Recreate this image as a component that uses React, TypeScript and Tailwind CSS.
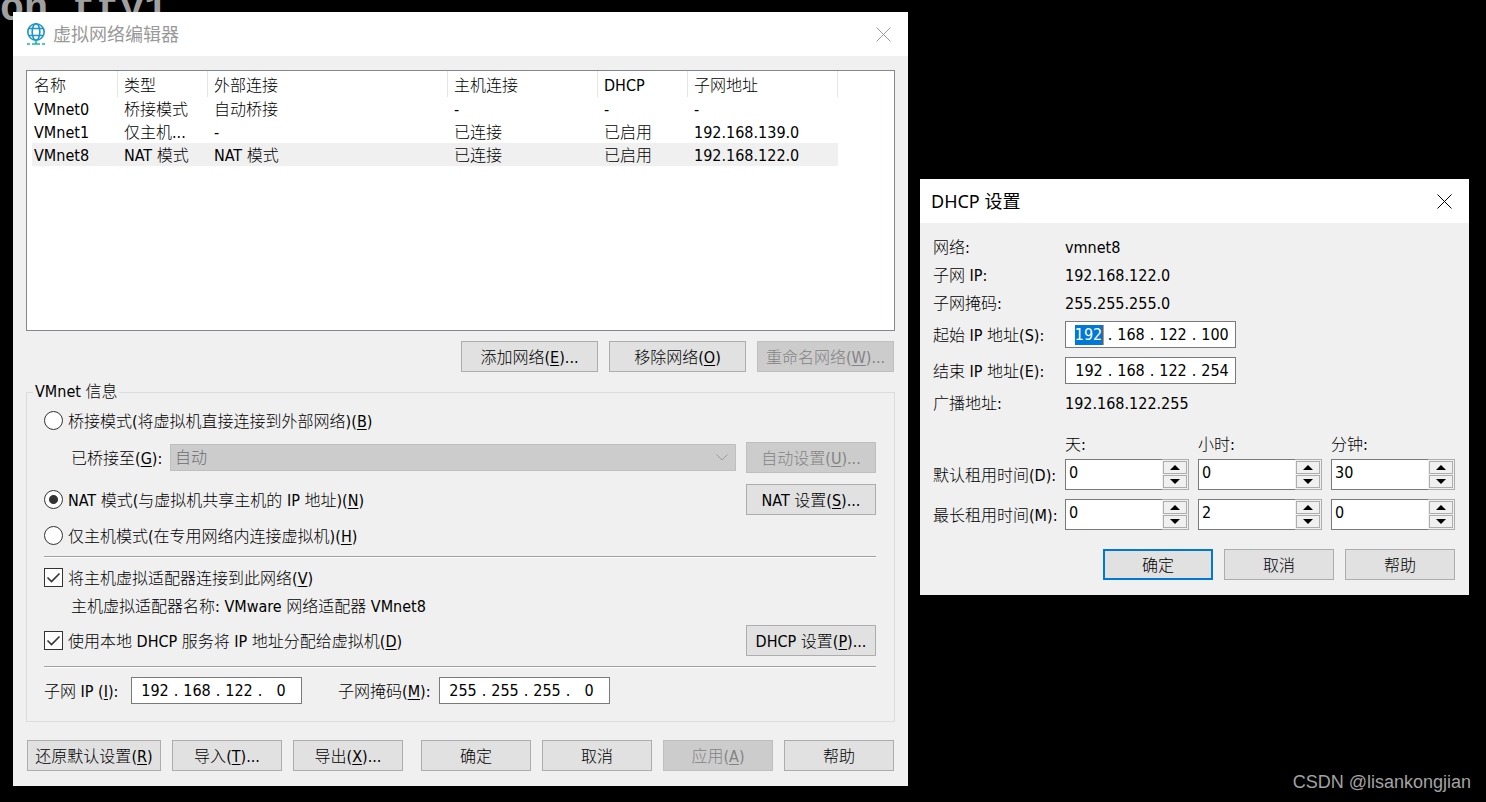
import { useState, type ReactNode } from "react";
import clsx from "clsx";

const networks = [
  { name: "VMnet0", type: "桥接模式", external: "自动桥接", host: "-", dhcp: "-", subnet: "-" },
  { name: "VMnet1", type: "仅主机...", external: "-", host: "已连接", dhcp: "已启用", subnet: "192.168.139.0" },
  { name: "VMnet8", type: "NAT 模式", external: "NAT 模式", host: "已连接", dhcp: "已启用", subnet: "192.168.122.0" },
];

const columns = [
  { title: "名称", width: "w-[86px]" },
  { title: "类型", width: "w-[90px]" },
  { title: "外部连接", width: "w-[240px]" },
  { title: "主机连接", width: "w-[150px]" },
  { title: "DHCP", width: "w-[90px]" },
  { title: "子网地址", width: "w-[150px]" },
];

// Label text with an underlined access key, e.g. 导入(T)...
function Keyed({ text, k, after = "" }: { text: string; k: string; after?: string }) {
  return (
    <span className="whitespace-nowrap">
      {text}(<span className="underline underline-offset-2">{k}</span>){after}
    </span>
  );
}

type ButtonProps = {
  children: ReactNode;
  className?: string;
  disabled?: boolean;
  primary?: boolean;
};

function Button({ children, className, disabled, primary }: ButtonProps) {
  return (
    <button
      type="button"
      disabled={disabled}
      className={clsx(
        "flex h-[31px] shrink-0 items-center justify-center pt-0.5",
        disabled && "border border-[#bfbfbf] bg-[#cccccc] text-[#838383]",
        !disabled && "bg-[#e1e1e1] text-black",
        !disabled && (primary ? "border-2 border-[#0078d7]" : "border border-[#adadad]"),
        className
      )}
    >
      {children}
    </button>
  );
}

function CloseButton({ className }: { className: string }) {
  return (
    <button type="button" aria-label="关闭" className={clsx("ml-auto", className)}>
      <svg width="15" height="15" viewBox="0 0 15 15" fill="none" stroke="currentColor">
        <path d="M0.5 0.5L14.5 14.5M14.5 0.5L0.5 14.5" />
      </svg>
    </button>
  );
}

function NetworkIcon() {
  return (
    <svg width="20" height="22" viewBox="0 0 20 22" fill="none">
      <g stroke="#1b95cb" strokeWidth="1.6">
        <circle cx="10" cy="9" r="8.2" />
        <ellipse cx="10" cy="9" rx="3.8" ry="8.2" />
        <path d="M3 5.5H17M3 12.5H17" />
      </g>
      <path d="M10 17V21M6 21H14M1 21H4M16 21H19" stroke="#14b8a6" strokeWidth="1.6" />
    </svg>
  );
}

type IpFieldProps = { label: string; value: string[]; selected?: number };

function IpField({ label, value, selected }: IpFieldProps) {
  return (
    <div role="group" aria-label={label} className="flex h-[27px] w-[171px] shrink-0 items-center border border-[#7a7a7a] bg-white pl-1.5">
      {value.map((octet, i) => (
        <div key={i} className="flex items-center">
          {i > 0 && <span className="w-2 text-center">.</span>}
          <div className="flex w-[34px] justify-center">
            <input
              aria-label={`${label} ${i + 1}`}
              defaultValue={octet}
              className={clsx(
                "h-5 text-center outline-none",
                selected === i ? "w-[29px] border-r border-[#ff8728] bg-[#0078d7] text-white" : "w-[34px]"
              )}
            />
          </div>
        </div>
      ))}
    </div>
  );
}

function Spinner({ label, initial }: { label: string; initial: number }) {
  const [value, setValue] = useState(initial);

  return (
    <div className="flex h-[31px] w-[124px]">
      <input
        aria-label={label}
        value={value}
        onChange={(e) => setValue(Number(e.target.value) || 0)}
        className="min-w-0 flex-1 border border-r-0 border-[#7a7a7a] bg-white pb-1 pl-[3px] outline-none"
      />
      <div className="flex w-[27px] flex-col gap-px border border-l-0 border-[#adadad] p-px">
        <button
          type="button"
          aria-label={`${label} +`}
          onClick={() => setValue(value + 1)}
          className="flex flex-1 items-center justify-center border border-[#adadad]"
        >
          <svg width="10" height="5" viewBox="0 0 10 5">
            <path d="M0 5L5 0L10 5Z" />
          </svg>
        </button>
        <button
          type="button"
          aria-label={`${label} -`}
          onClick={() => setValue(Math.max(0, value - 1))}
          className="flex flex-1 items-center justify-center border border-[#adadad]"
        >
          <svg width="10" height="5" viewBox="0 0 10 5">
            <path d="M0 0L5 5L10 0Z" />
          </svg>
        </button>
      </div>
    </div>
  );
}

type RadioProps = { children: ReactNode; value: string; mode: string; onChange: (v: string) => void };

function Radio({ children, value, mode, onChange }: RadioProps) {
  return (
    <label className="flex h-5 items-start gap-[5px] leading-[22px]">
      <input
        type="radio"
        name="mode"
        checked={mode === value}
        onChange={() => onChange(value)}
        className="size-[19px] appearance-none rounded-full border border-[#333333] bg-white checked:bg-[radial-gradient(circle,#333333_4px,#ffffff_5px)]"
      />
      {children}
    </label>
  );
}

function Checkbox({ children }: { children: ReactNode }) {
  return (
    <label className="flex h-5 items-start gap-[5px] leading-[22px]">
      <span className="relative flex size-[19px]">
        <input type="checkbox" defaultChecked className="peer size-[19px] appearance-none border border-[#333333] bg-white" />
        <svg
          className="pointer-events-none absolute inset-0 hidden peer-checked:block"
          width="19"
          height="19"
          viewBox="0 0 19 19"
          fill="none"
          stroke="#333333"
          strokeWidth="1.6"
        >
          <path d="M3.5 9.5L7.5 13.5L15.5 5.5" />
        </svg>
      </span>
      {children}
    </label>
  );
}

function Separator() {
  return <div className="h-0.5 border-b border-white bg-[#a0a0a0]" />;
}

function NetworkTable() {
  return (
    <div className="h-[261px] border border-[#828790] bg-white pl-[5px]">
      <table className="table-fixed border-separate border-spacing-0 text-left">
        <thead>
          <tr className="h-[26px]">
            {columns.map((c, i) => (
              <th key={c.title} className={clsx("border-r border-[#e5e5e5] p-0 pt-1 font-light", i === 0 ? "pl-0.5" : "pl-1.5", c.width)}>
                {c.title}
              </th>
            ))}
          </tr>
        </thead>
        <tbody>
          {networks.map((n) => (
            <tr key={n.name} className={clsx("h-[23px]", n.name === "VMnet8" && "bg-[#f0f0f0]")}>
              <td className="p-0 pt-0.5 pl-0.5">{n.name}</td>
              <td className="p-0 pt-0.5 pl-1.5 whitespace-nowrap">{n.type}</td>
              <td className="p-0 pt-0.5 pl-1.5">{n.external}</td>
              <td className="p-0 pt-0.5 pl-1.5">{n.host}</td>
              <td className="p-0 pt-0.5 pl-1.5">{n.dhcp}</td>
              <td className="p-0 pt-0.5 pl-1.5">{n.subnet}</td>
            </tr>
          ))}
        </tbody>
      </table>
    </div>
  );
}

function NetworkEditor() {
  const [mode, setMode] = useState("nat");

  return (
    <section className="relative min-w-0 flex-[895] bg-[#f0f0f0]">
      <header className="flex h-11 items-center bg-white pr-[17px] pl-[13px]">
        <NetworkIcon />
        <h1 className="ml-[7px] font-['Noto_Sans','Noto_Sans_CJK_SC',sans-serif] text-lg font-normal text-[#999999]">虚拟网络编辑器</h1>
        <CloseButton className="text-[#999999]" />
      </header>

      <div className="px-[13px] pt-3.5 pb-[15px]">
        <NetworkTable />

        <div className="mt-2.5 mr-px flex justify-end gap-[11px]">
          <Button className="w-[137px]"><Keyed text="添加网络" k="E" after="..." /></Button>
          <Button className="w-[137px]"><Keyed text="移除网络" k="O" /></Button>
          <Button className="w-[137px]" disabled><Keyed text="重命名网络" k="W" after="..." /></Button>
        </div>

        <fieldset className="mt-2.5 border border-[#dcdcdc] pr-[18px] pb-[17px] pl-[17px]">
          <legend className="-ml-[11px] px-0.5 leading-5">VMnet 信息</legend>

          <div className="mt-[9px]">
            <Radio value="bridge" mode={mode} onChange={setMode}>
              <Keyed text="桥接模式(将虚拟机直接连接到外部网络)" k="B" />
            </Radio>
          </div>

          <div className="mt-[11px] flex items-center pl-[27px]">
            <label htmlFor="bridged" className="w-[99px] pt-0.5"><Keyed text="已桥接至" k="G" after=":" /></label>
            <div className="relative flex flex-1">
              <select id="bridged" disabled className="h-[27px] w-full appearance-none border border-[#bfbfbf] bg-[#cccccc] pl-1 text-[#6d6d6d] opacity-100">
                <option>自动</option>
              </select>
              <svg className="absolute top-2.5 right-2" width="12" height="7" viewBox="0 0 12 7" fill="none" stroke="#9a9a9a">
                <path d="M0.5 0.5L6 6L11.5 0.5" />
              </svg>
            </div>
            <Button className="ml-2.5 w-[130px]" disabled><Keyed text="自动设置" k="U" after="..." /></Button>
          </div>

          <div className="mt-[11px] flex items-center justify-between">
            <Radio value="nat" mode={mode} onChange={setMode}>
              <Keyed text="NAT 模式(与虚拟机共享主机的 IP 地址)" k="N" />
            </Radio>
            <Button className="w-[130px]"><Keyed text="NAT 设置" k="S" after="..." /></Button>
          </div>

          <div className="mt-[11px] mb-2.5">
            <Radio value="host" mode={mode} onChange={setMode}>
              <Keyed text="仅主机模式(在专用网络内连接虚拟机)" k="H" />
            </Radio>
          </div>

          <Separator />

          <div className="mt-2.5">
            <Checkbox><Keyed text="将主机虚拟适配器连接到此网络" k="V" /></Checkbox>
          </div>
          <p className="mt-[9px] pl-[27px] leading-5">主机虚拟适配器名称: VMware 网络适配器 VMnet8</p>

          <div className="mt-2 mb-2.5 flex items-center justify-between">
            <Checkbox><Keyed text="使用本地 DHCP 服务将 IP 地址分配给虚拟机" k="D" /></Checkbox>
            <Button className="w-[130px]"><Keyed text="DHCP 设置" k="P" after="..." /></Button>
          </div>

          <Separator />

          <div className="mt-[9px] flex items-center">
            <span className="w-[87px] pt-0.5"><Keyed text="子网 IP " k="I" after=":" /></span>
            <IpField label="子网 IP" value={["192", "168", "122", "0"]} />
            <span className="ml-9 w-[101px] pt-0.5"><Keyed text="子网掩码" k="M" after=":" /></span>
            <IpField label="子网掩码" value={["255", "255", "255", "0"]} />
          </div>
        </fieldset>

        <footer className="mt-[18px] mr-px ml-px flex gap-[11px]">
          <Button className="w-[134px]"><Keyed text="还原默认设置" k="R" /></Button>
          <Button className="w-[110px]"><Keyed text="导入" k="T" after="..." /></Button>
          <Button className="w-[110px]"><Keyed text="导出" k="X" after="..." /></Button>
          <Button className="ml-auto w-[110px]">确定</Button>
          <Button className="w-[110px]">取消</Button>
          <Button className="w-[110px]" disabled><Keyed text="应用" k="A" /></Button>
          <Button className="w-[110px]">帮助</Button>
        </footer>
      </div>
    </section>
  );
}

function DhcpDialog() {
  return (
    <section className="relative mt-[167px] min-w-0 flex-[549] bg-[#f0f0f0]">
      <header className="flex h-11 items-center bg-white pr-[17px] pl-[11px]">
        <h2 className="font-['Noto_Sans','Noto_Sans_CJK_SC',sans-serif] text-lg font-normal">DHCP 设置</h2>
        <CloseButton className="text-black" />
      </header>

      <div className="pt-[11px] pr-3.5 pb-[15px] pl-[13px]">
        <dl className="grid grid-cols-[132px_1fr] leading-7">
          <dt>网络:</dt>
          <dd>vmnet8</dd>
          <dt>子网 IP:</dt>
          <dd>192.168.122.0</dd>
          <dt>子网掩码:</dt>
          <dd>255.255.255.0</dd>
        </dl>
        <div className="mt-[3px] grid grid-cols-[132px_1fr] items-center gap-y-[9px]">
          <span className="pt-0.5">起始 IP 地址(S):</span>
          <IpField label="起始 IP 地址" value={["192", "168", "122", "100"]} selected={0} />
          <span className="pt-0.5">结束 IP 地址(E):</span>
          <IpField label="结束 IP 地址" value={["192", "168", "122", "254"]} />
        </div>
        <dl className="mt-1.5 grid grid-cols-[132px_1fr] leading-7">
          <dt>广播地址:</dt>
          <dd>192.168.122.255</dd>
        </dl>

        <div className="mt-[17px] grid grid-cols-[minmax(0,1fr)_124px_124px_124px] gap-x-[9px] leading-5">
          <span className="col-start-2">天:</span>
          <span>小时:</span>
          <span>分钟:</span>
        </div>
        <div className="mt-1 grid grid-cols-[minmax(0,1fr)_124px_124px_124px] items-center gap-[9px]">
          <span className="pt-0.5 whitespace-nowrap">默认租用时间(D):</span>
          <Spinner label="默认租用时间 天" initial={0} />
          <Spinner label="默认租用时间 小时" initial={0} />
          <Spinner label="默认租用时间 分钟" initial={30} />
          <span className="pt-0.5 whitespace-nowrap">最长租用时间(M):</span>
          <Spinner label="最长租用时间 天" initial={0} />
          <Spinner label="最长租用时间 小时" initial={2} />
          <Spinner label="最长租用时间 分钟" initial={0} />
        </div>

        <footer className="mt-[19px] flex justify-end gap-[11px]">
          <Button className="w-[110px]" primary>确定</Button>
          <Button className="w-[110px]">取消</Button>
          <Button className="w-[110px]">帮助</Button>
        </footer>
      </div>
    </section>
  );
}

export default function App() {
  return (
    <main className="relative min-h-screen overflow-hidden bg-black font-['DejaVu_Sans_Condensed','Noto_Sans_CJK_SC',sans-serif] text-base leading-5 font-light text-black">
      {/* console line left behind the windows */}
      <pre className="absolute -top-2.5 left-0 font-['Liberation_Mono',monospace] text-[40px] leading-10 font-bold text-[#a0a0a0]">on tty1</pre>

      <div className="flex items-start gap-3 pt-3 pr-[17px] pl-[13px]">
        <NetworkEditor />
        <DhcpDialog />
      </div>

      <p className="absolute right-[15px] bottom-2.5 font-['Liberation_Sans',sans-serif] text-lg leading-5 font-normal text-[#a3a3a3]">
        CSDN @lisankongjian
      </p>
    </main>
  );
}
